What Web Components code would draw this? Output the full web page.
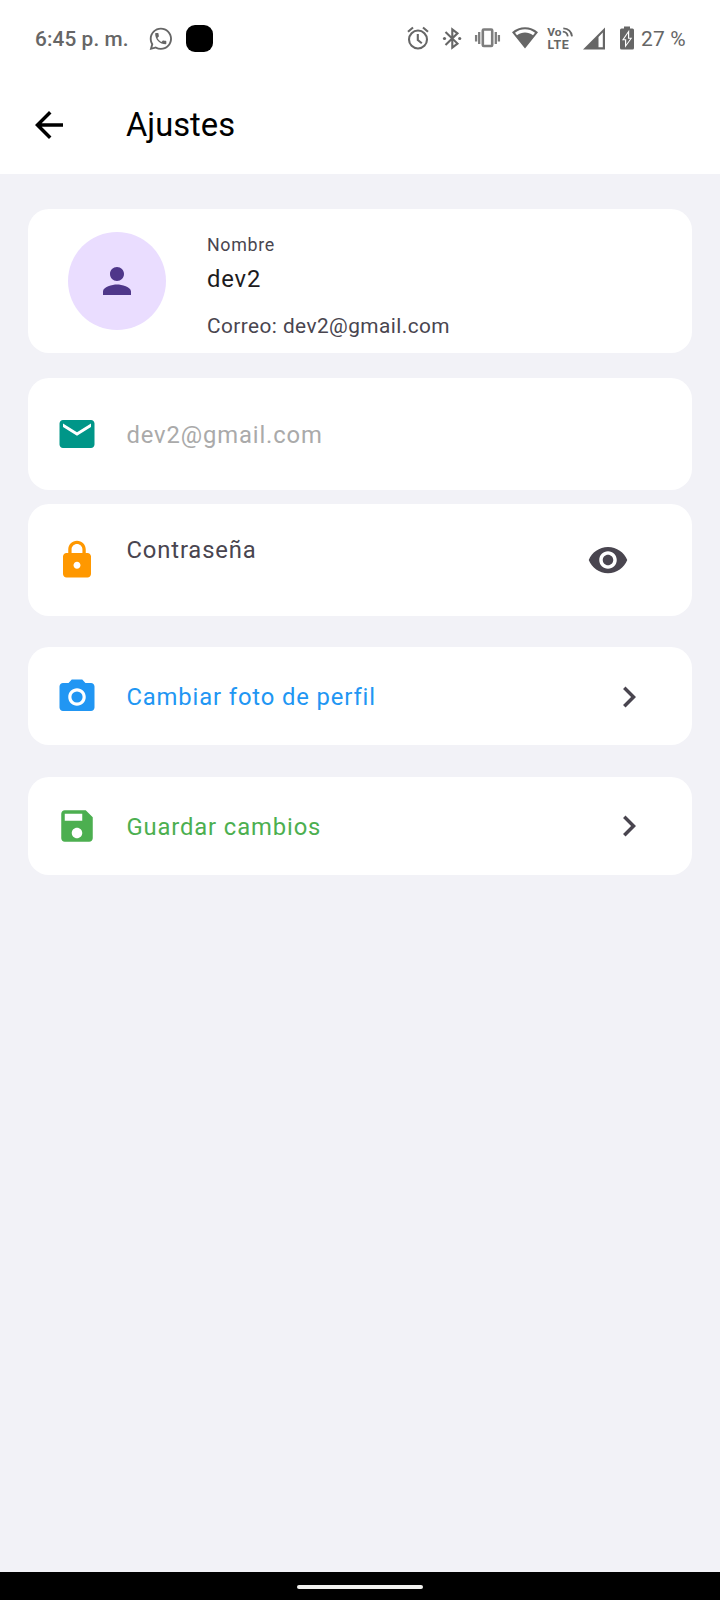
<!DOCTYPE html>
<html lang="es">
<head>
<meta charset="utf-8">
<title>Ajustes</title>
<style>
html,body{margin:0;padding:0}
body{font-family:Roboto,"Noto Sans",sans-serif;background:#f2f2f7}
</style>
</head>
<body>
<settings-screen></settings-screen>
<script>
const define = (name, html) => customElements.define(name, class extends HTMLElement {
  constructor() {
    super();
    const t = document.createElement('template');
    t.innerHTML = html;
    this.attachShadow({mode: 'open'}).append(t.content.cloneNode(true));
  }
});

const ICONS = {
  back: 'M20 11H7.83l5.59-5.59L12 4l-8 8 8 8 1.41-1.41L7.83 13H20v-2z',
  person: 'M12 12c2.21 0 4-1.79 4-4s-1.79-4-4-4-4 1.79-4 4 1.79 4 4 4zm0 2c-2.67 0-8 1.34-8 4v2h16v-2c0-2.66-5.33-4-8-4z',
  mail: 'M20 4H4c-1.1 0-1.99.9-1.99 2L2 18c0 1.1.9 2 2 2h16c1.1 0 2-.9 2-2V6c0-1.1-.9-2-2-2zm0 4l-8 5-8-5V6l8 5 8-5v2z',
  lock: 'M18 8h-1V6c0-2.76-2.24-5-5-5S7 3.24 7 6v2H6c-1.1 0-2 .9-2 2v10c0 1.1.9 2 2 2h12c1.1 0 2-.9 2-2V10c0-1.1-.9-2-2-2zm-6 9c-1.1 0-2-.9-2-2s.9-2 2-2 2 .9 2 2-.9 2-2 2zm3.1-9H8.9V6c0-1.71 1.39-3.1 3.1-3.1s3.1 1.39 3.1 3.1v2z',
  eye: 'M12 4.5C7 4.5 2.73 7.61 1 12c1.73 4.39 6 7.5 11 7.5s9.27-3.11 11-7.5c-1.73-4.39-6-7.5-11-7.5zM12 17c-2.76 0-5-2.24-5-5s2.24-5 5-5 5 2.24 5 5-2.24 5-5 5zm0-8c-1.66 0-3 1.34-3 3s1.34 3 3 3 3-1.34 3-3-1.34-3-3-3z',
  camera: 'M15.2 12A3.2 3.2 0 1 1 8.8 12A3.2 3.2 0 1 1 15.2 12zM9 2L7.17 4H4c-1.1 0-2 .9-2 2v12c0 1.1.9 2 2 2h16c1.1 0 2-.9 2-2V6c0-1.1-.9-2-2-2h-3.17L15 2H9zm3 15c-2.76 0-5-2.24-5-5s2.24-5 5-5 5 2.24 5 5-2.24 5-5 5z',
  save: 'M17 3H5c-1.11 0-2 .9-2 2v14c0 1.1.89 2 2 2h14c1.1 0 2-.9 2-2V7l-4-4zm-5 16c-1.66 0-3-1.34-3-3s1.34-3 3-3 3 1.34 3 3-1.34 3-3 3zm3-10H5V5h10v4z',
  chevron: 'M10 6L8.59 7.41 13.17 12l-4.58 4.59L10 18l6-6z'
};
customElements.define('app-icon', class extends HTMLElement {
  constructor() {
    super();
    this.attachShadow({mode: 'open'});
  }
  connectedCallback() {
    this.shadowRoot.innerHTML = `<style>:host{display:block;flex:none;width:42px;height:42px}svg{display:block}</style>
      <svg width="42" height="42" viewBox="0 0 24 24" fill="currentColor"><path d="${ICONS[this.getAttribute('name')]}"/></svg>`;
  }
});

define('status-bar', `<style>
:host{display:flex;height:76px;align-items:center;color:#666;font-size:20.8px;font-weight:500;line-height:24px;white-space:nowrap;box-sizing:border-box;padding:1px 35px 0}
svg{display:block;flex:none;height:28px}
.time{width:113px;letter-spacing:.1px}
.dot{width:27px;height:27px;border-radius:9px;background:#000;margin-left:11px}
.sp{flex:1}
.pct{width:44px;margin-left:6px;font-weight:400;font-size:21px;letter-spacing:.15px}
</style>
<span class="time">6:45 p. m.</span>
<svg width="27" viewBox="148 24 27 28" fill="currentColor"><g transform="translate(147.4 24.4) scale(1.12)"><path d="M12.04 2C6.58 2 2.13 6.45 2.13 11.91C2.13 13.66 2.59 15.36 3.45 16.86L2.05 22L7.3 20.62C8.75 21.41 10.38 21.83 12.04 21.83C17.5 21.83 21.95 17.38 21.95 11.92C21.95 9.27 20.92 6.78 19.05 4.91C17.18 3.03 14.69 2 12.04 2M12.05 3.67C14.25 3.67 16.31 4.53 17.87 6.09C19.42 7.65 20.28 9.72 20.28 11.92C20.28 16.46 16.58 20.15 12.04 20.15C10.56 20.15 9.11 19.76 7.85 19L7.55 18.83L4.43 19.65L5.26 16.61L5.06 16.29C4.24 15 3.8 13.47 3.8 11.91C3.81 7.37 7.5 3.67 12.05 3.67"/></g><path transform="translate(153.3 30.2) scale(.62)" d="M6.62 10.79c1.44 2.83 3.76 5.14 6.59 6.59l2.2-2.2c.27-.27.67-.36 1.02-.24 1.12.37 2.33.57 3.57.57.55 0 1 .45 1 1V20c0 .55-.45 1-1 1-9.39 0-17-7.61-17-17 0-.55.45-1 1-1h3.5c.55 0 1 .45 1 1 0 1.25.2 2.45.57 3.57.11.35.03.74-.25 1.02l-2.2 2.2z"/></svg>
<span class="dot"></span>
<span class="sp"></span>
<svg width="30" viewBox="405 24.5 30 28" fill="none" stroke="currentColor" stroke-width="2.1"><circle cx="418" cy="39" r="9"/><path d="M417.8 33.5v6l4 3.2M408 31.2l5-4.2M428 31.2l-5-4.2"/></svg>
<svg width="34" viewBox="435 24.5 34 28" fill="none" stroke="currentColor" stroke-width="2.1"><path d="M445.5 31.5l12 11.6-5.2 4V28.8l5.2 4-12 11.6"/><circle cx="444.5" cy="38" r="1.6" fill="currentColor" stroke="none"/><circle cx="459.7" cy="38" r="1.6" fill="currentColor" stroke="none"/></svg>
<svg width="38" viewBox="469 24.5 38 28" fill="none" stroke="currentColor" stroke-opacity=".85"><rect x="482.8" y="29" width="9.4" height="16.5" rx="1" stroke-width="2.6"/><path d="M479.2 31.5v12M476.1 34.5v6.5M495.8 31.5v12M498.9 34.5v6.5" stroke-width="2.3"/></svg>
<svg width="36" viewBox="507 24.5 36 28" fill="currentColor"><path fill-rule="evenodd" d="M512 31.8C519.5 25 530.5 25 538 31.8L525 48zM515 32.2L517 34.7C522 31.2 528 31.2 533 34.7L535 32.2C529 27.6 521 27.6 515 32.2z"/></svg>
<svg width="36" viewBox="543 24.5 36 28" fill="currentColor" font-family="Roboto,sans-serif" font-weight="700"><text x="547.3" y="35.3" font-size="11.8" textLength="14.2" lengthAdjust="spacingAndGlyphs">Vo</text><text x="547.5" y="48" font-size="12.4" textLength="21.3" lengthAdjust="spacing">LTE</text><g fill="none" stroke="currentColor" stroke-width="1.8"><path d="M562.8 31.2Q567 31.4 567.8 35.8M563.3 27.8Q571 28.2 572 35.8"/></g></svg>
<svg width="34" viewBox="579 24.5 34 28" fill="currentColor"><path fill-rule="evenodd" d="M583 49L605 27V49zM598.5 36.5L602.8 32V46.8H598.5z"/></svg>
<svg width="22" viewBox="613 24.5 22 28" fill="currentColor"><path fill-rule="evenodd" d="M624 26h6v2h2.5q1.5 0 1.5 1.5V47.5q0 1.5-1.5 1.5H621.5q-1.5 0-1.5-1.5V29.5q0-1.5 1.5-1.5H624zM629.2 29.2L622 39.8H625V47.3L632.2 37.2H629.2z"/><path d="M628 32.8L624 38.7H626.2V44L630.3 38.3H628z"/></svg>
<span class="pct">27 %</span>`);

define('top-bar', `<style>
:host{display:flex;align-items:center;height:98px;box-sizing:border-box;padding-left:28px;color:#000}
h1{margin:0 0 0 56px;font-size:32.725px;font-weight:400;line-height:40px}
</style><app-icon name="back"></app-icon><h1><slot></slot></h1>`);

define('profile-card', `<style>
:host{display:flex;height:144px;border-radius:21px;background:#fff;box-sizing:border-box;padding:23px 40px 0 40.3px}
.avatar{width:98px;height:98px;border-radius:50%;background:#eaddff;color:#4f378a;display:grid;place-items:center;margin-right:40.7px;flex:none}
.info{display:flex;flex-direction:column;color:#49454f;white-space:nowrap}
.label{font-size:17.85px;line-height:26px;letter-spacing:.65px}
.name{font-size:23.8px;line-height:30px;color:#1d1b20;letter-spacing:.875px;margin-top:6px}
.mail{font-size:20.825px;line-height:28px;letter-spacing:.4375px;margin-top:18px}
</style><div class="avatar"><app-icon name="person"></app-icon></div>
<div class="info"><div class="label">Nombre</div><div class="name"><slot name="name"></slot></div><div class="mail"><slot name="mail"></slot></div></div>`);

define('setting-row', `<style>
:host{display:flex;align-items:center;height:98px;border-radius:21px;background:#fff;box-sizing:border-box;padding:0 42px 0 28px;font-size:23.8px;line-height:30px;letter-spacing:.875px;white-space:nowrap}
.text{flex:1;margin-left:28.4px}
::slotted([slot=end]){color:#49454f}
</style><slot name="start"></slot><div class="text"><slot></slot></div><slot name="end"></slot>`);

define('nav-bar', `<style>
:host{display:grid;place-items:center;height:28px;background:#000;box-sizing:border-box;padding-top:2px}
i{display:block;width:126px;height:4px;border-radius:2px;background:#f1f1ef}
</style><i></i>`);

define('settings-screen', `<style>
:host{display:flex;flex-direction:column;width:720px;height:1600px;background:#f2f2f7}
header{background:#fff;height:174px;flex:none}
main{flex:1;display:flex;flex-direction:column;padding:35px 28px 0}
.email{height:112px;margin-top:25px}
.pass{height:112px;margin-top:14px;padding-right:63px}
.photo{margin-top:31.4px;padding-top:1px;color:#2196f3}
.save{margin-top:31.6px;color:#4caf50}
.hint{display:block;color:#aaa;padding-top:2px}
.pwd{display:block;color:#49454f;padding-bottom:20px}
.down{display:block;padding-top:2px}
.teal{color:#009688}.orange{color:#ff9800}
</style>
<header><status-bar></status-bar><top-bar>Ajustes</top-bar></header>
<main>
<profile-card><span slot="name">dev2</span><span slot="mail">Correo: dev2@gmail.com</span></profile-card>
<setting-row class="email"><app-icon slot="start" class="teal" name="mail"></app-icon><span class="hint">dev2@gmail.com</span></setting-row>
<setting-row class="pass"><app-icon slot="start" class="orange" name="lock"></app-icon><span class="pwd">Contraseña</span><app-icon slot="end" name="eye"></app-icon></setting-row>
<setting-row class="photo"><app-icon slot="start" name="camera"></app-icon>Cambiar foto de perfil<app-icon slot="end" name="chevron"></app-icon></setting-row>
<setting-row class="save"><app-icon slot="start" name="save"></app-icon><span class="down">Guardar cambios</span><app-icon slot="end" name="chevron"></app-icon></setting-row>
</main>
<nav-bar></nav-bar>`);
</script>
</body>
</html>
